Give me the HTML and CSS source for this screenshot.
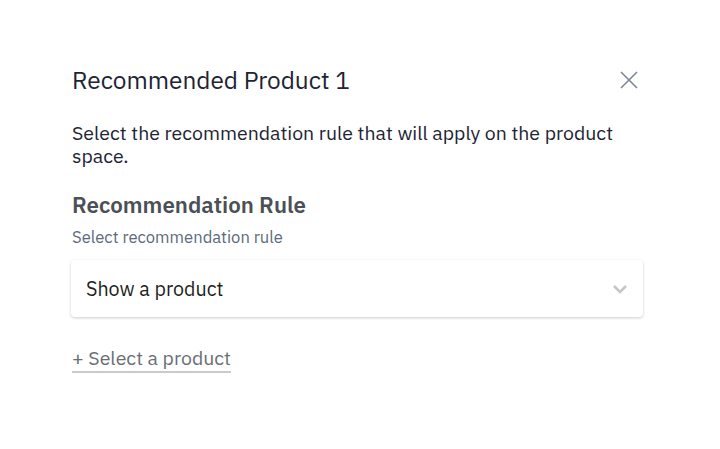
FILE: index.html
```html
<!DOCTYPE html>
<html lang="en">

<head>
  <meta charset="UTF-8">
  <meta name="viewport" content="width=device-width, initial-scale=1.0">
  <title>Recommended Product 1</title>
  <link rel="stylesheet" href="styles.css">
</head>

<body>
  <div class="panel">
    <header class="panel-header">
      <h1 class="panel-title">Recommended Product 1</h1>
      <button class="close-btn" aria-label="Close">
        <svg width="20" height="20" viewBox="0 0 20 20">
          <path d="M2 2 L18 18 M18 2 L2 18" stroke="#7b8795" stroke-width="1.6" fill="none" />
        </svg>
      </button>
    </header>

    <p class="panel-desc">Select the recommendation rule that will apply on the product space.</p>

    <h2 class="section-title">Recommendation Rule</h2>
    <label class="field-label">Select recommendation rule</label>

    <div class="select-box">
      <span class="select-value">Show a product</span>
      <svg class="chevron" width="16" height="10" viewBox="0 0 16 10">
        <path d="M2 2 L8 8 L14 2" stroke="#c4c6c9" stroke-width="2.6" fill="none" />
      </svg>
    </div>

    <a class="add-link" href="#">+ Select a product</a>
  </div>
</body>

</html>
```

FILE: styles.css
```css
html {
  box-sizing: border-box;
}

*,
*::before,
*::after {
  box-sizing: inherit;
}

body {
  margin: 0;
  background: #fff;
  font-family: "IBM Plex Sans", Roboto, "Liberation Sans", sans-serif;
  color: #1d2433;
}

.panel {
  padding: 62px 76px 0 72px;
  display: flex;
  flex-direction: column;
  align-items: flex-start;
}

.panel-header {
  width: 100%;
  display: flex;
  justify-content: space-between;
  align-items: center;
}

.panel-title {
  margin: 0;
  font-size: 24.4px;
  font-weight: 400;
  line-height: 36px;
  color: #1d2433;
}

.close-btn {
  border: 0;
  background: none;
  padding: 0;
  width: 20px;
  height: 20px;
  margin-right: 5px;
  cursor: pointer;
}

.panel-desc {
  margin: 23px 0 0;
  font-size: 19.5px;
  line-height: 23px;
  max-width: 565px;
  color: #1d2433;
}

.section-title {
  margin: 23px 0 0;
  font-size: 22.3px;
  font-weight: 600;
  line-height: 30px;
  color: #4b4f56;
}

.field-label {
  margin-top: 6px;
  font-size: 16.6px;
  line-height: 22px;
  color: #5c6a7b;
}

.select-box {
  margin-top: 12px;
  width: 572px;
  height: 57px;
  margin-left: -1px;
  padding: 0 15px;
  display: flex;
  align-items: center;
  justify-content: space-between;
  background: #fff;
  border-radius: 4px;
  box-shadow: 0 1px 3px rgba(0 0 0 / 0.2);
}

.select-value {
  font-size: 19.7px;
  color: #1d1f22;
}

.add-link {
  margin-top: 29px;
  font-size: 19.5px;
  line-height: 24px;
  color: #6a6e74;
  text-decoration: none;
  border-bottom: 2px solid #c9cacc;
  padding-bottom: 1px;
}
```
